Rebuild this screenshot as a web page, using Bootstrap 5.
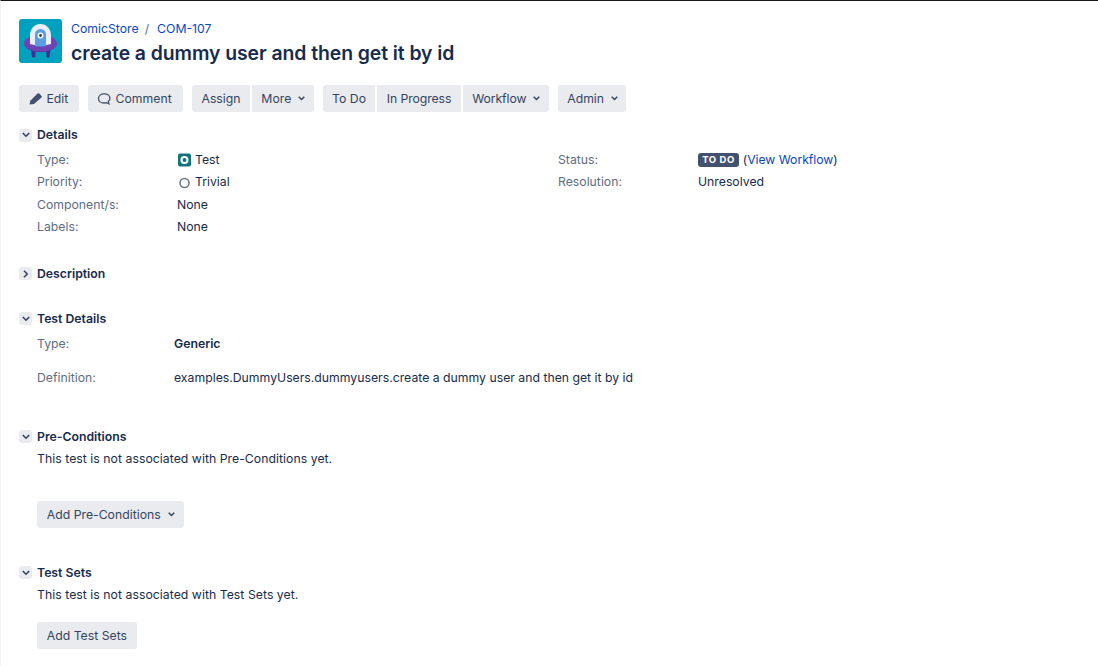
<!doctype html>
<html><head><meta charset="utf-8">
<link href="https://cdn.jsdelivr.net/npm/bootstrap@5.3.0/dist/css/bootstrap.min.css" rel="stylesheet">
<style>
html,body{height:666px;overflow:hidden}
body{font-family:Inter,"Liberation Sans",sans-serif;font-size:12.25px;line-height:20px;color:#172b4d;background:#fff;border-top:1px solid #1a1a1a;border-left:1px solid #f2f3f6}
a{color:#0747c6;text-decoration:none}
.issue-wrap{padding:18px 0 0 18px}
.crumbs{line-height:18px;height:18px;margin-top:1px}
.crumbs .sep{color:#5e6c84;margin:0 8px 0 6px}
.issue-title{font-size:19.4px;line-height:28px;font-weight:600;margin:1px 0 0;color:#172b4d;letter-spacing:-.07px}
.head-gap{gap:9px}
.tools{margin-top:18px;height:27px}
.jbtn{background:#e9ebef;color:#344563;border:0;border-radius:3px;height:27px;padding:0 9.4px;font-size:12.25px;line-height:27px;display:inline-flex;align-items:center;white-space:nowrap}
.jbtn.has-chev{padding-right:8.4px}
.jbtn.btn-edit{padding-right:10.4px}
.jbtn.btn-comment{padding-right:11.4px}
.jbtn.tight{letter-spacing:-.09px}
.jbtn.act-btn{padding-left:9.75px;padding-right:9.75px}
.jbtn.act-btn.has-chev{padding-right:9px}
.tgroup{display:flex;gap:2px;margin-right:9px}
.tgroup .jbtn{border-radius:0}
.tgroup .jbtn:first-child{border-radius:3px 0 0 3px}
.tgroup .jbtn:last-child{border-radius:0 3px 3px 0}
.tgroup .jbtn:only-child{border-radius:3px}
.chev{margin-left:7px;flex:none}
.sec-head{display:flex;align-items:center;height:20px;font-weight:600;color:#172b4d}
.tog{width:13px;height:13px;background:#e9ebef;border-radius:3px;margin-right:5px;display:flex;align-items:center;justify-content:center;flex:none}
.sec-body{padding-left:18px}
.lab{color:#5e6c84}
.drow{display:flex;height:22.4px;line-height:22.4px}
.dl{width:140px;flex:none}
.dcol{width:521px;flex:none}
.todo{background:#42526e;color:#fff;font-size:9.5px;font-weight:700;border-radius:3px;line-height:14px;height:14px;padding:0 4.2px;letter-spacing:.6px;margin-right:3.5px;align-self:center}
.wf{letter-spacing:-.05px}
.ic{margin-right:4.5px;flex:none;align-self:center}
.ic-tight{margin-right:4px}
.tl{width:137px;flex:none}
.s-details{margin-top:13px}
.s-details .sec-body{margin-top:4px}
.s-desc{margin-top:25px}
.s-testd{margin-top:25px}
.s-testd .sec-body{margin-top:5px}
.trow{display:flex;height:20px}
.trow + .trow{margin-top:14px}
.s-pre{margin-top:39px}
.s-sets{margin-top:35px}
.note{margin-top:2px;letter-spacing:.035px}
.act-pre{margin-top:32px}
.act-sets{margin-top:17px}
</style></head><body>
<div class="issue-wrap">
<div class="d-flex head-gap">
<svg width="43" height="44" viewBox="0 0 43 44"><rect width="43" height="44" rx="3" fill="#00a0bf"/><path d="M12 30h4.500v8q-2 1-3.500 0z" fill="#403294"/><path d="M27 30h4.500l-1 8q-1.500 1-3 0z" fill="#403294"/><ellipse cx="21.500" cy="24.500" rx="16.500" ry="8.500" fill="#6f42b5"/><path d="M8 29q13.500 7 27 0-5 4.200-13.500 4.200T8 29z" fill="#5f37a8"/><path d="M11 25V16a10.500 11 0 0 1 21 0v9q-10.500 3-21 0z" fill="#e9eef8"/><path d="M16 27V15.500a5.500 5.500 0 0 1 11 0V27q-5.500 1-11 0z" fill="#5c9ee0"/><circle cx="21.500" cy="16.500" r="2.900" fill="#fff"/><circle cx="21.500" cy="16.500" r="1.400" fill="#253858"/></svg>
<div>
<div class="crumbs"><a href="#">ComicStore</a><span class="sep">/</span><a href="#">COM-107</a></div>
<h1 class="issue-title">create a dummy user and then get it by id</h1>
</div>
</div>
<div class="tools d-flex">
<div class="tgroup"><button class="jbtn btn-edit"><svg class="ic ic-tight" width="14" height="14" viewBox="0 0 14 14"><path d="M1.500 12.500l.8-3.700 7.200-7.200a1.200 1.200 0 0 1 1.700 0l2.300 2.300a1.200 1.200 0 0 1 0 1.700L6 12z" fill="#42526e"/></svg>Edit</button></div>
<div class="tgroup"><button class="jbtn btn-comment"><svg class="ic" width="14" height="14" viewBox="0 0 14 14"><path d="M7 1.800c-3.200 0-5.500 2-5.500 4.600 0 2.700 2.300 4.600 5.500 4.600.8 0 1.600-.1 2.300-.4l2.700 1.300-.7-2.600c1-.8 1.700-1.800 1.700-2.900 0-2.600-2.300-4.600-5.500-4.600z" fill="none" stroke="#42526e" stroke-width="1.300"/></svg>Comment</button></div>
<div class="tgroup"><button class="jbtn">Assign</button><button class="jbtn has-chev">More<svg class="chev" width="7" height="5" viewBox="0 0 7 5"><path d="M.7.8l2.800 2.700L6.300.8" fill="none" stroke="#344563" stroke-width="1.500"/></svg></button></div>
<div class="tgroup"><button class="jbtn">To Do</button><button class="jbtn tight">In Progress</button><button class="jbtn has-chev tight">Workflow<svg class="chev" width="7" height="5" viewBox="0 0 7 5"><path d="M.7.8l2.800 2.700L6.300.8" fill="none" stroke="#344563" stroke-width="1.500"/></svg></button></div>
<div class="tgroup"><button class="jbtn has-chev">Admin<svg class="chev" width="7" height="5" viewBox="0 0 7 5"><path d="M.7.8l2.800 2.700L6.300.8" fill="none" stroke="#344563" stroke-width="1.500"/></svg></button></div>
</div>

<section class="s-details">
<div class="sec-head"><span class="tog"><svg width="8" height="6" viewBox="0 0 8 6"><path d="M.8 1l3.200 3.200L7.200 1" fill="none" stroke="#344563" stroke-width="1.600"/></svg></span>Details</div>
<div class="sec-body d-flex">
<div class="dcol">
<div class="drow"><span class="dl lab">Type:</span><span class="d-flex"><svg class="ic ic-tight" width="14" height="14" viewBox="0 0 14 14"><rect x="1" y="0.500" width="13" height="13" rx="2" fill="#14727c"/><circle cx="7.500" cy="7" r="3" fill="none" stroke="#fff" stroke-width="2"/></svg>Test</span></div>
<div class="drow"><span class="dl lab">Priority:</span><span class="d-flex"><svg class="ic ic-tight" width="14" height="14" viewBox="0 0 14 14"><circle cx="7.500" cy="7" r="4.500" fill="none" stroke="#6b778c" stroke-width="1.600"/></svg>Trivial</span></div>
<div class="drow"><span class="dl lab">Component/s:</span><span>None</span></div>
<div class="drow"><span class="dl lab">Labels:</span><span>None</span></div>
</div>
<div>
<div class="drow"><span class="dl lab">Status:</span><span class="d-flex"><span class="todo">TO DO</span><span>(<a class="wf" href="#">View Workflow</a>)</span></span></div>
<div class="drow"><span class="dl lab">Resolution:</span><span>Unresolved</span></div>
</div>
</div>
</section>

<section class="s-desc">
<div class="sec-head"><span class="tog"><svg width="6" height="8" viewBox="0 0 6 8"><path d="M1 .8l3.200 3.200L1 7.200" fill="none" stroke="#344563" stroke-width="1.600"/></svg></span>Description</div>
</section>

<section class="s-testd">
<div class="sec-head"><span class="tog"><svg width="8" height="6" viewBox="0 0 8 6"><path d="M.8 1l3.200 3.200L7.200 1" fill="none" stroke="#344563" stroke-width="1.600"/></svg></span>Test Details</div>
<div class="sec-body">
<div class="trow"><span class="tl lab">Type:</span><span class="fw-semibold">Generic</span></div>
<div class="trow"><span class="tl lab">Definition:</span><span>examples.DummyUsers.dummyusers.create a dummy user and then get it by id</span></div>
</div>
</section>

<section class="s-pre">
<div class="sec-head"><span class="tog"><svg width="8" height="6" viewBox="0 0 8 6"><path d="M.8 1l3.200 3.200L7.200 1" fill="none" stroke="#344563" stroke-width="1.600"/></svg></span>Pre-Conditions</div>
<div class="sec-body">
<div class="note">This test is not associated with Pre-Conditions yet.</div>
<div class="act-pre"><button class="jbtn has-chev act-btn">Add Pre-Conditions<svg class="chev" width="7" height="5" viewBox="0 0 7 5"><path d="M.7.8l2.800 2.700L6.300.8" fill="none" stroke="#344563" stroke-width="1.500"/></svg></button></div>
</div>
</section>

<section class="s-sets">
<div class="sec-head"><span class="tog"><svg width="8" height="6" viewBox="0 0 8 6"><path d="M.8 1l3.200 3.200L7.200 1" fill="none" stroke="#344563" stroke-width="1.600"/></svg></span>Test Sets</div>
<div class="sec-body">
<div class="note">This test is not associated with Test Sets yet.</div>
<div class="act-sets"><button class="jbtn act-btn">Add Test Sets</button></div>
</div>
</section>
</div>
</body></html>
